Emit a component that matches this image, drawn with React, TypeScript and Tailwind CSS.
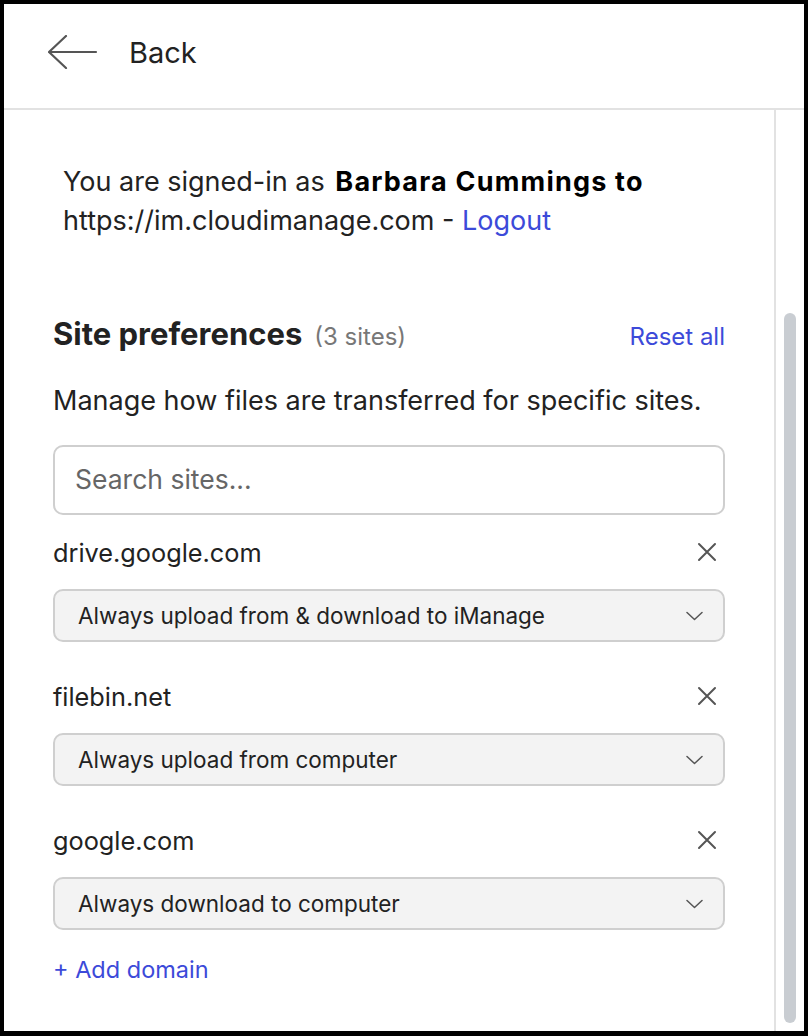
import React from "react";

const sites = [
  { domain: "drive.google.com", value: "Always upload from & download to iManage" },
  { domain: "filebin.net", value: "Always upload from computer" },
  { domain: "google.com", value: "Always download to computer" },
];

function XIcon() {
  return (
    <svg width="20" height="20" viewBox="0 0 20 20" fill="none" stroke="#555" strokeWidth="2" strokeLinecap="round">
      <path d="M2 2L18 18M18 2L2 18" />
    </svg>
  );
}

function Chevron() {
  return (
    <svg width="17" height="10" viewBox="0 0 17 10" fill="none" stroke="#555" strokeWidth="1.5" strokeLinecap="round" strokeLinejoin="round">
      <path d="M1 1.5L8.5 8.5L16 1.5" />
    </svg>
  );
}

export default function App() {
  return (
    <div
      className="w-[808px] h-[1036px] bg-black pt-[4px] pl-[4px] pr-[4px] pb-[5px]"
      style={{ fontFamily: "Inter, 'Liberation Sans', sans-serif" }}
    >
      <div className="w-full h-full bg-white flex flex-col">
        <header className="h-[106px] shrink-0 border-b-2 border-[#e2e2e2] flex items-center pl-[44px]">
          <svg width="50" height="34" viewBox="0 0 50 34" fill="none" stroke="#555" strokeWidth="2.2" strokeLinecap="round" strokeLinejoin="round" className="mt-[-8px]">
            <path d="M1 17H48M18 1L1 17L18 33" />
          </svg>
          <span className="ml-[31px] text-[29px] leading-none text-[#222] mt-[-8px]">Back</span>
        </header>
        <div className="flex-1 flex min-h-0">
          <div className="flex-1 border-r-2 border-[#e2e2e2] pl-[49px] pr-[49px] pt-[52px]">
            <p className="pl-[10px] text-[27px] leading-[39px] text-[#222]">
              You are signed-in as{" "}
              <b className="font-bold text-black tracking-[1.2px] ml-[3px]">Barbara Cummings to</b>
              <br />
              https://im.cloudimanage.com - <span className="text-[#3c4ad9]">Logout</span>
            </p>
            <div className="mt-[76px] flex items-baseline h-[36px]">
              <h2 className="text-[31px] leading-[36px] font-bold text-[#222]">Site preferences</h2>
              <span className="ml-[12px] text-[24px] text-[#777]">(3 sites)</span>
              <span className="ml-auto text-[24px] text-[#3c4ad9]">Reset all</span>
            </div>
            <p className="mt-[33px] text-[27px] leading-[32px] text-[#222]">
              Manage how files are transferred for specific sites.
            </p>
            <div className="mt-[28px] h-[70px] rounded-[10px] border-2 border-[#cfcfcf] flex items-center pl-[20px] text-[26.5px] text-[#666]">
              Search sites...
            </div>
            <div className="mt-[22px] flex flex-col">
              {sites.map((s, i) => (
                <div key={s.domain} className={i > 0 ? "mt-[39px]" : ""}>
                  <div className="flex items-center h-[32px] text-[25.3px] leading-[32px] text-[#222]">
                    <span>{s.domain}</span>
                    <span className="ml-auto mr-[8px] mt-[-2px]">
                      <XIcon />
                    </span>
                  </div>
                  <div className="mt-[20px] h-[53px] rounded-[10px] border-2 border-[#cfcfcf] bg-[#f3f3f3] flex items-center pl-[23px] pr-[20px] text-[22.5px] text-[#222]">
                    <span>{s.value}</span>
                    <span className="ml-auto flex">
                      <Chevron />
                    </span>
                  </div>
                </div>
              ))}
            </div>
            <div className="mt-[25px] text-[23.5px] leading-[30px] text-[#3c4ad9]">+ Add domain</div>
          </div>
          <div className="w-[28px] shrink-0 pl-[8px] pt-[203px] pb-[8px]">
            <div className="w-[12px] h-full rounded-full bg-[#c9cdd2]" />
          </div>
        </div>
      </div>
    </div>
  );
}
